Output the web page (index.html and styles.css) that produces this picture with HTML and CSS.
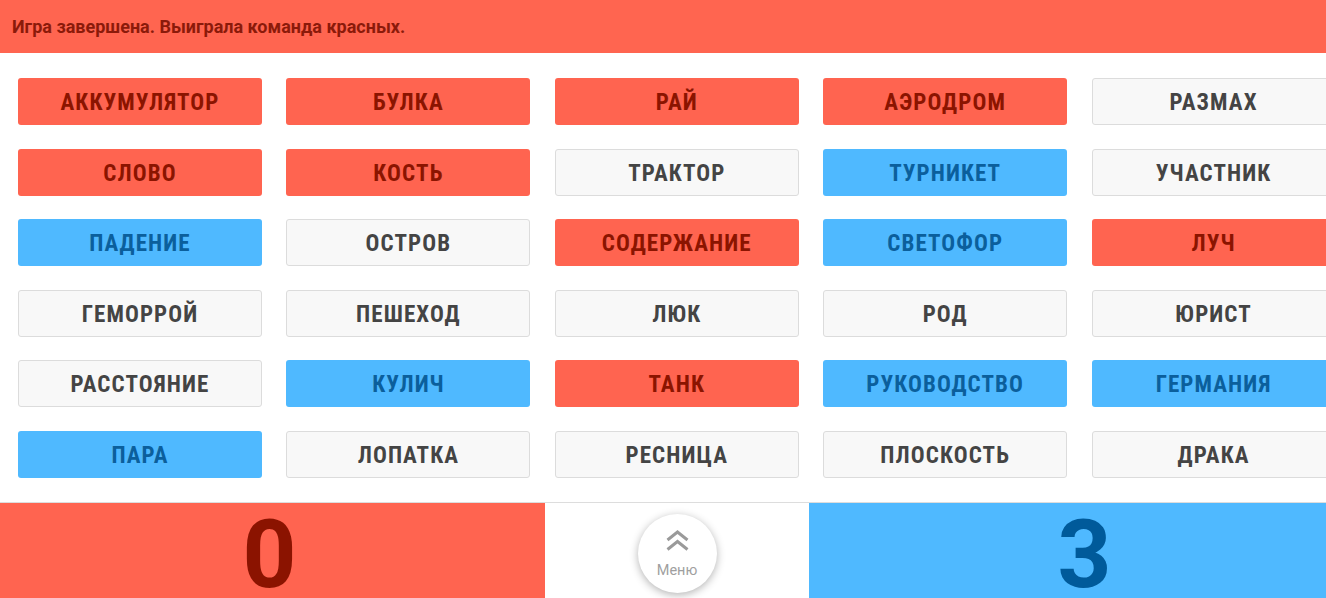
FILE: index.html
```html
<!DOCTYPE html>
<html lang="ru">
<head>
<meta charset="utf-8">
<title>Игра</title>
<link rel="stylesheet" href="styles.css">
</head>
<body>
<div class="page">
  <header class="status">Игра завершена. Выиграла команда красных.</header>
  <main class="board">
    <div class="card red">АККУМУЛЯТОР</div>
    <div class="card red">БУЛКА</div>
    <div class="card red">РАЙ</div>
    <div class="card red">АЭРОДРОМ</div>
    <div class="card plain">РАЗМАХ</div>

    <div class="card red">СЛОВО</div>
    <div class="card red">КОСТЬ</div>
    <div class="card plain">ТРАКТОР</div>
    <div class="card blue">ТУРНИКЕТ</div>
    <div class="card plain">УЧАСТНИК</div>

    <div class="card blue">ПАДЕНИЕ</div>
    <div class="card plain">ОСТРОВ</div>
    <div class="card red">СОДЕРЖАНИЕ</div>
    <div class="card blue">СВЕТОФОР</div>
    <div class="card red">ЛУЧ</div>

    <div class="card plain">ГЕМОРРОЙ</div>
    <div class="card plain">ПЕШЕХОД</div>
    <div class="card plain">ЛЮК</div>
    <div class="card plain">РОД</div>
    <div class="card plain">ЮРИСТ</div>

    <div class="card plain">РАССТОЯНИЕ</div>
    <div class="card blue">КУЛИЧ</div>
    <div class="card red">ТАНК</div>
    <div class="card blue">РУКОВОДСТВО</div>
    <div class="card blue">ГЕРМАНИЯ</div>

    <div class="card blue">ПАРА</div>
    <div class="card plain">ЛОПАТКА</div>
    <div class="card plain">РЕСНИЦА</div>
    <div class="card plain">ПЛОСКОСТЬ</div>
    <div class="card plain">ДРАКА</div>
  </main>
  <footer class="scorebar">
    <div class="score score-red">0</div>
    <div class="menu-cell">
      <button class="menu-btn" type="button">
        <svg class="menu-icon" viewBox="0 0 23 21" width="23" height="21" aria-hidden="true">
          <path d="M1.5 10 L11.5 2 L21.5 10" fill="none" stroke="#9a9a9a" stroke-width="3"/>
          <path d="M1.5 19.5 L11.5 11.5 L21.5 19.5" fill="none" stroke="#9a9a9a" stroke-width="3"/>
        </svg>
        <span class="menu-label">Меню</span>
      </button>
    </div>
    <div class="score score-blue">3</div>
  </footer>
</div>
</body>
</html>
```

FILE: styles.css
```css
html, body {
  margin: 0;
  padding: 0;
  background: #ffffff;
  overflow: hidden;
}

body {
  font-family: Roboto, "Liberation Sans", sans-serif;
  width: 1326px;
  height: 598px;
}

.page {
  width: 1360px;
  display: flex;
  flex-direction: column;
}

.status {
  height: 53px;
  background: #ff6550;
  color: #8b1a0a;
  font-weight: 700;
  font-size: 18px;
  padding-left: 12px;
  display: flex;
  align-items: center;
  box-sizing: border-box;
  width: 1326px;
}

.board {
  display: grid;
  grid-template-columns: repeat(5, 244px);
  grid-auto-rows: 47px;
  column-gap: 24.4px;
  row-gap: 23.6px;
  padding: 25px 0 24px 18px;
}

.card {
  box-sizing: border-box;
  border-radius: 3px;
  display: flex;
  align-items: center;
  justify-content: center;
  padding-top: 2px;
  font-family: "Roboto Condensed", Roboto, sans-serif;
  font-weight: 700;
  font-size: 23px;
  letter-spacing: 1.1px;
}

.card.red {
  background: #ff6450;
  color: #8b1400;
}

.card.blue {
  background: #4fb9ff;
  color: #0b5f9c;
}

.card.plain {
  background: #f8f8f8;
  border: 1px solid #dcdcdc;
  color: #444444;
}

.scorebar {
  display: flex;
  height: 96px;
  border-top: 1px solid #dddddd;
}

.score {
  width: 545px;
  display: flex;
  justify-content: center;
  align-items: flex-start;
  font-family: Roboto, sans-serif;
  font-weight: 700;
  font-size: 94px;
  line-height: 94px;
  padding-top: 5px;
  box-sizing: border-box;
}

.score-red {
  background: #ff6450;
  color: #8b1300;
  padding-right: 6px;
}

.score-blue {
  background: #4fb9ff;
  color: #005a9a;
  padding-left: 6px;
}

.menu-cell {
  width: 264px;
  background: #ffffff;
  display: flex;
  justify-content: center;
  align-items: flex-start;
  padding-top: 11px;
  box-sizing: border-box;
}

.menu-btn {
  width: 79px;
  height: 79px;
  border-radius: 50%;
  border: none;
  background: #ffffff;
  box-shadow: 0 2px 8px rgba(0, 0, 0, 0.3);
  display: flex;
  flex-direction: column;
  align-items: center;
  justify-content: flex-start;
  padding: 16px 0 0 0;
  gap: 13px;
}

.menu-icon {
  display: block;
}

.menu-label {
  font-family: Roboto, sans-serif;
  font-size: 14.5px;
  color: #9f9f9f;
  line-height: 1;
}
```
